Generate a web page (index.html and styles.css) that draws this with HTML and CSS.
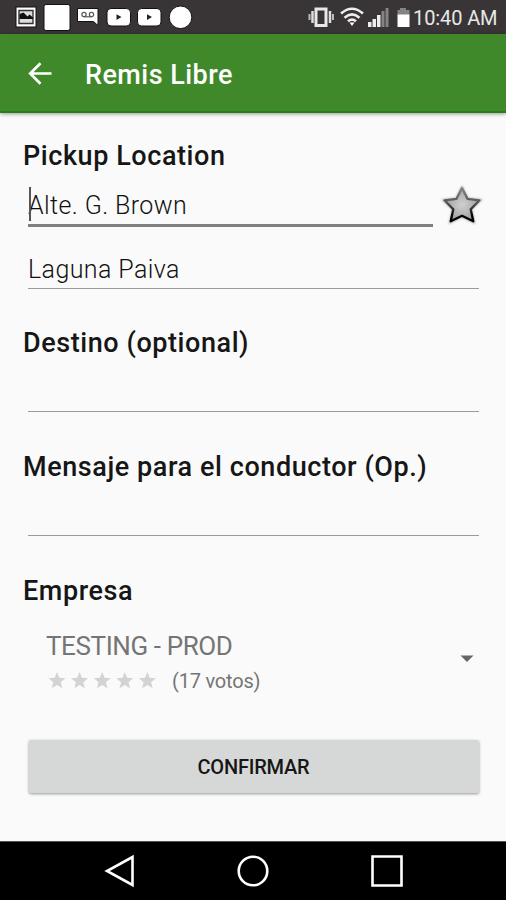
FILE: index.html
```html
<!DOCTYPE html>
<html lang="es">
<head>
<meta charset="utf-8">
<title>Remis Libre</title>
<link rel="stylesheet" href="styles.css">
</head>
<body>
<div class="status">
  <svg class="notifications" width="180" height="34" viewBox="14 0 180 34">
    <g fill="#fff" stroke="#111" stroke-width="1">
      <rect x="16" y="7" width="20" height="20"/>
      <rect x="44" y="4.500" width="26" height="26" rx="2"/>
      <path d="M77.500 8.500h20.500v17l-4.500-4h-16z"/>
      <rect x="107" y="8.500" width="23.500" height="17.500" rx="4"/>
      <rect x="137.500" y="8.500" width="23.500" height="17.500" rx="4"/>
      <circle cx="180.500" cy="17.300" r="11.300"/>
    </g>
    <path d="M19 10.500h14v13H19z" fill="#ddd" stroke="#333" stroke-width="1.400"/>
    <path d="M19.500 14l4-1.500 4 4 2-2 3.500 3V19H19.500z" fill="#111"/>
    <g fill="none" stroke="#555" stroke-width="1.200"><circle cx="84" cy="14.500" r="2.100"/><circle cx="91.500" cy="14.500" r="2.100"/><path d="M84 16.800h7.500"/></g>
    <path d="M116.500 14.300v5.600l5-2.800zM147 14.300v5.600l5-2.800z" fill="#222"/>
  </svg>
  <svg class="signals" width="104" height="34" viewBox="307 0 104 34">
    <rect x="316" y="9" width="10" height="16.500" fill="none" stroke="#e8e8e8" stroke-width="3"/>
    <path d="M312.500 11v12M330 11v12" stroke="#ddd" stroke-width="2.500"/>
    <path d="M309.500 14v6M333 14v6" stroke="#bbb" stroke-width="2"/>
    <g fill="none" stroke="#eee" stroke-width="2.600"><path d="M341 13.500q11-9.500 22 0M344.500 17.700q7.500-6.500 15 0M348 21.300q4-3.300 8 0"/></g>
    <path d="M349.500 22.500h5L352 26z" fill="#fff"/>
    <g fill="#eee"><path d="M368 22h3.500v5H368zM372.500 19h3.500v8h-3.500zM377 15h3.500v12H377z"/></g>
    <path d="M381.500 11h3v16h-3zM385.500 8h3v19h-3z" fill="#858384"/>
    <path d="M400 8h6v3h-6zM397.500 10h12v5h-12z" fill="#858384"/><path d="M397.500 14.500h12V27h-12z" fill="#fff"/>
  </svg>
  <span class="clock">10:40 AM</span>
</div>
<header class="appbar">
  <svg width="26" height="26" viewBox="0 0 26 26" fill="none" stroke="#fff" stroke-width="2.700"><path d="M24.500 13.500H3M13.500 3.200L3.200 13.500l10.300 10.300"/></svg>
  <h1>Remis Libre</h1>
</header>
<main class="form">
  <h2>Pickup Location</h2>
  <div class="pickup">
    <div class="field focused"><i class="caret"></i><span>Alte. G. Brown</span></div>
    <svg width="44" height="44" viewBox="0 0 44 44">
      <defs>
        <linearGradient id="edge" x2="0" y2="1"><stop offset="0" stop-color="#858585"/><stop offset=".45" stop-color="#555"/><stop offset=".85" stop-color="#000"/></linearGradient>
        <radialGradient id="metal"><stop offset="0" stop-color="#d0d0d0"/><stop offset="1" stop-color="#a0a0a0"/></radialGradient>
        <filter id="soft" x="-20%" y="-20%" width="140%" height="140%"><feGaussianBlur stdDeviation="1"/></filter>
      </defs>
      <path d="M22 4.500l5.500 11.200 13 1.300-9.500 9.500 3 13-12-6-12 6 3-13L3.500 17l13-1.300z" fill="#aaa" stroke="#aaa" stroke-width="2" filter="url(#soft)"/>
      <path d="M22 5l5.500 10.800 12 1.500-8.800 8.900 2.600 12.100L22 32.700l-11.300 5.600 2.600-12.100-8.800-8.900 12-1.500z" fill="url(#metal)" stroke="url(#edge)" stroke-width="2.300" stroke-linejoin="round"/>
    </svg>
  </div>
  <div class="field city"><span>Laguna Paiva</span></div>
  <h2>Destino (optional)</h2>
  <div class="field empty"></div>
  <h2>Mensaje para el conductor (Op.)</h2>
  <div class="field empty"></div>
  <h2>Empresa</h2>
  <div class="company">
    <div>
      <div class="name">TESTING - PROD</div>
      <div class="rating">
        <svg width="112" height="22" viewBox="0 0 112 22" fill="#d3d3d3">
          <defs><path id="star" d="M11 2l2.300 5.800 6.200.4-4.800 4 1.600 6.100-5.300-3.400-5.300 3.400 1.600-6.100-4.800-4 6.200-.4z"/></defs>
          <use href="#star"/><use href="#star" x="22.600"/><use href="#star" x="45.200"/><use href="#star" x="67.800"/><use href="#star" x="90.400"/>
        </svg>
        <span>(17 votos)</span>
      </div>
    </div>
    <svg width="14" height="8" viewBox="0 0 14 8"><path d="M.5.500h13L7 7z" fill="#666"/></svg>
  </div>
  <button class="confirm">CONFIRMAR</button>
</main>
<nav class="navbar">
  <svg width="34" height="34" viewBox="0 0 34 34"><path d="M30.500 3v28L5 17z"/></svg>
  <svg width="34" height="34" viewBox="0 0 34 34"><circle cx="17" cy="17" r="14.300"/></svg>
  <svg width="34" height="34" viewBox="0 0 34 34"><path d="M2.500 2.500h29v29h-29z"/></svg>
</nav>
</body>
</html>
```
FILE: styles.css
```css
* { box-sizing: border-box; }
body {
  margin: 0;
  width: 506px;
  height: 900px;
  display: flex;
  flex-direction: column;
  overflow: hidden;
  background: #fafafa;
  color: #161616;
  font-family: Roboto, sans-serif;
  white-space: nowrap;
}
svg { display: block; flex: none; }
h1, h2 { margin: 0; font-weight: 500; }
.status {
  height: 34px;
  flex: none;
  display: flex;
  padding-left: 14px;
  background: #393536;
}
.signals { margin-left: 113px; }
.clock {
  margin-left: 2px;
  color: #e8e8e8;
  font-size: 20px;
  line-height: 37px;
  letter-spacing: -.1px;
}
.appbar {
  height: 79px;
  flex: none;
  display: flex;
  align-items: center;
  gap: 32px;
  padding-left: 27px;
  background: #40892a;
  border-bottom: 2px solid #25801a;
  box-shadow: 0 1px 4px rgba(0, 0, 0, .4);
  color: #fff;
}
h1 { font-size: 27px; line-height: 34px; padding-top: 5px; letter-spacing: .45px; }
.form {
  flex: 1;
  display: flex;
  flex-direction: column;
  padding: 27px 27px 0 28px;
}
h2 {
  margin-left: -5px;
  height: 32px;
  flex: none;
  font-size: 27px;
  line-height: 32px;
  letter-spacing: .57px;
}
.pickup {
  height: 55px;
  display: flex;
  margin-right: -5px;
}
.pickup svg { margin: 11px 0 0 7px; }
.field {
  position: relative;
  border-bottom: 1px solid #9b9b9b;
  font-size: 25px;
  font-weight: 300;
  letter-spacing: .4px;
  color: #111;
}
.focused {
  width: 405px;
  height: 55px;
  border-bottom: 3px solid #808080;
  line-height: 67px;
}
.caret {
  position: absolute;
  left: 1px;
  top: 15px;
  width: 2px;
  height: 34px;
  background: #555;
}
.city { height: 62px; line-height: 86px; padding-left: 0; }
.city + h2 { margin-top: 38px; }
.empty { height: 53px; }
.empty + h2 { margin-top: 39px; }
.company {
  height: 89px;
  display: flex;
  justify-content: space-between;
  align-items: flex-start;
  padding: 0 5px 0 18px;
  color: #757575;
}
.name { font-size: 26px; line-height: 30px; margin-top: 24px; letter-spacing: -.4px; }
.rating { display: flex; align-items: center; gap: 14px; height: 36px; font-size: 20px; letter-spacing: -.2px; padding-top: 4px; }
.company > svg { margin-top: 48px; }
.confirm {
  margin: 44px .5px 0;
  height: 53px;
  border: 0;
  border-radius: 2px;
  background: #d6d8d7;
  box-shadow: 0 1px 3px rgba(0, 0, 0, .4);
  color: #161616;
  font: 500 20px Roboto, sans-serif;
  letter-spacing: -.2px;
}
.navbar {
  height: 59px;
  flex: none;
  display: flex;
  justify-content: center;
  align-items: center;
  gap: 100px;
  border-top: 1px solid #555;
  background: #000;
}
.navbar svg { fill: none; stroke: #fff; stroke-width: 2.600; }
```
